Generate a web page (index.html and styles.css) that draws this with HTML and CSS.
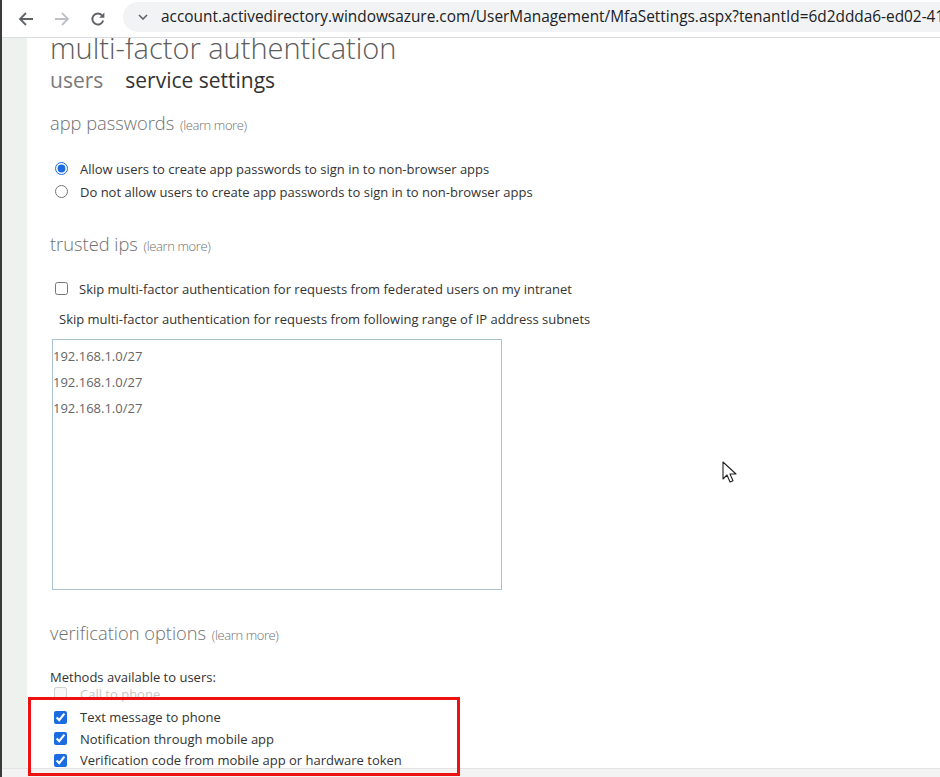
FILE: index.html
```html
<!DOCTYPE html>
<html lang="en">
<head>
<meta charset="utf-8">
<title>multi-factor authentication</title>
<link rel="stylesheet" href="styles.css">
</head>
<body>
<div class="window">
  <header class="toolbar">
    <button class="nav-btn" aria-label="Back">
      <svg width="16" height="16" viewBox="0 0 16 16"><path d="M15 8H2.5M8 2L2 8l6 6" fill="none" stroke="#5f6368" stroke-width="1.8"/></svg>
    </button>
    <button class="nav-btn" aria-label="Forward">
      <svg width="16" height="16" viewBox="0 0 16 16"><path d="M1 8h12.5M8 2l6 6-6 6" fill="none" stroke="#bdc1c6" stroke-width="1.8"/></svg>
    </button>
    <button class="nav-btn" aria-label="Reload">
      <svg width="16" height="16" viewBox="0 0 16 16"><path d="M13.2 9.5A5.5 5.5 0 1 1 12 4.3" fill="none" stroke="#5f6368" stroke-width="1.9"/><path d="M14.4 1.6v5.2H9.2z" fill="#5f6368"/></svg>
    </button>
    <div class="omnibox">
      <svg class="chev" width="10" height="6" viewBox="0 0 10 6"><path d="M1 1l4 4 4-4" fill="none" stroke="#5f6368" stroke-width="1.6"/></svg>
      <span class="url">account.activedirectory.windowsazure.com/UserManagement/MfaSettings.aspx?tenantId=6d2ddda6-ed02-416a-</span>
    </div>
  </header>

  <div class="viewport">
    <aside class="gutter"></aside>
    <main class="page">
      <h1 class="title">multi-factor authentication</h1>
      <nav class="tabs">
        <span class="tab">users</span>
        <span class="tab active">service settings</span>
      </nav>

      <section class="group">
        <h2 class="group-title">app passwords <a class="learn">(learn more)</a></h2>
        <label class="opt radio-opt"><input type="radio" name="apppw" checked> Allow users to create app passwords to sign in to non-browser apps</label>
        <label class="opt radio-opt"><input type="radio" name="apppw"> Do not allow users to create app passwords to sign in to non-browser apps</label>
      </section>

      <section class="group">
        <h2 class="group-title">trusted ips <a class="learn">(learn more)</a></h2>
        <label class="opt fed-opt"><input type="checkbox"> Skip multi-factor authentication for requests from federated users on my intranet</label>
        <p class="subnet-label">Skip multi-factor authentication for requests from following range of IP address subnets</p>
        <textarea class="ips" readonly>192.168.1.0/27
192.168.1.0/27
192.168.1.0/27</textarea>
      </section>

      <section class="group">
        <h2 class="group-title">verification options <a class="learn">(learn more)</a></h2>
        <p class="methods-label">Methods available to users:</p>
        <label class="opt method disabled"><input type="checkbox" disabled> Call to phone</label>
        <label class="opt method"><input type="checkbox" checked> Text message to phone</label>
        <label class="opt method"><input type="checkbox" checked> Notification through mobile app</label>
        <label class="opt method"><input type="checkbox" checked> Verification code from mobile app or hardware token</label>
      </section>
    </main>
  </div>
  <div class="hscroll"></div>
  <div class="highlight"></div>
  <svg class="cursor" width="16" height="24" viewBox="0 0 16 24"><path d="M1 1v17l4-4 3 7 3-1.3-3-6.7h6z" fill="#fff" stroke="#222" stroke-width="1.1" stroke-linejoin="round"/></svg>
</div>
</body>
</html>
```
FILE: styles.css
```css
* { box-sizing: border-box; }
html, body { margin: 0; padding: 0; background: #fff; }
body {
  font-family: "Segoe UI", "Open Sans", sans-serif;
  width: 940px;
  height: 777px;
  overflow: hidden;
}
.window {
  position: relative;
  height: 777px;
  border-left: 2px solid #3a3a3a;
  display: flex;
  flex-direction: column;
}
.toolbar {
  height: 38px;
  flex: none;
  display: flex;
  align-items: center;
  background: #fff;
  border-bottom: 1px solid #dadce0;
  padding-left: 6px;
}
.nav-btn {
  width: 36px;
  height: 30px;
  border: 0;
  background: none;
  padding: 0;
  display: flex;
  align-items: center;
  justify-content: center;
  flex: none;
}
.omnibox {
  margin-left: 7px;
  height: 30px;
  flex: 1;
  min-width: 0;
  background: #f1f3f4;
  border-radius: 15px 0 0 15px;
  display: flex;
  align-items: center;
  padding-left: 15px;
  overflow: hidden;
  white-space: nowrap;
  margin-top: -4px;
}
.chev { flex: none; margin-right: 13px; }
.url {
  font-size: 15.4px;
  color: #202124;
}
.viewport {
  flex: 1;
  display: flex;
  overflow: hidden;
}
.gutter {
  width: 25px;
  flex: none;
  background: #eef2ee;
}
.page {
  padding-left: 23px;
  color: #333;
}
.title {
  margin: -7px 0 0;
  font-size: 29px;
  line-height: 34px;
  font-weight: 300;
  color: #5c5c5c;
}
.tabs {
  display: flex;
  gap: 22px;
  margin-top: 1px;
  font-size: 21px;
  line-height: 28px;
}
.tab { color: #7a7a7a; }
.tab.active { color: #333; }
.group-title {
  font-size: 18.3px;
  font-weight: 300;
  color: #707070;
  margin: 0;
  line-height: 24px;
}
.learn {
  font-size: 13px;
  color: #707070;
  letter-spacing: -0.4px;
  margin-left: 1px;
}
.group:nth-of-type(1) .group-title { margin-top: 17px; }
.opt {
  display: flex;
  align-items: center;
  font-size: 13px;
  color: #333;
  white-space: nowrap;
}
.opt input {
  margin: 0 12px 0 5px;
  width: 13px;
  height: 13px;
  accent-color: #1a6ce0;
}
.radio-opt { height: 23px; }
.radio-opt:first-of-type { margin-top: 20px; }
.group:nth-of-type(2) .group-title { margin-top: 29px; }
.fed-opt { margin-top: 19px; height: 23px; }
.fed-opt input { margin-right: 11px; }
.subnet-label {
  margin: 11px 0 0 9px;
  font-size: 13px;
  line-height: 16px;
  color: #333;
}
.ips {
  display: block;
  margin: 12px 0 0 2px;
  width: 450px;
  height: 251px;
  border: 1px solid #a9c1d1;
  resize: none;
  font-family: inherit;
  font-size: 13px;
  line-height: 26px;
  color: #666;
  padding: 3px 0 0;
  outline: none;
}
.group:nth-of-type(3) .group-title { margin-top: 31px; }
.methods-label {
  margin: 21px 0 0;
  font-size: 13px;
  line-height: 18px;
}
.method { height: 21.5px; }
.method input { margin-left: 4px; margin-right: 13px; }
.method.disabled { color: #c8c8c8; margin-top: -3px; margin-bottom: 2px; }
.highlight {
  position: absolute;
  left: 26px;
  top: 697px;
  width: 432px;
  height: 79px;
  border: 3px solid #ee1111;
  pointer-events: none;
}
.cursor {
  position: absolute;
  left: 720px;
  top: 461px;
}
.hscroll {
  height: 9px;
  flex: none;
  background: #f3f3f3;
  border-top: 1px solid #e4e4e4;
}
```
